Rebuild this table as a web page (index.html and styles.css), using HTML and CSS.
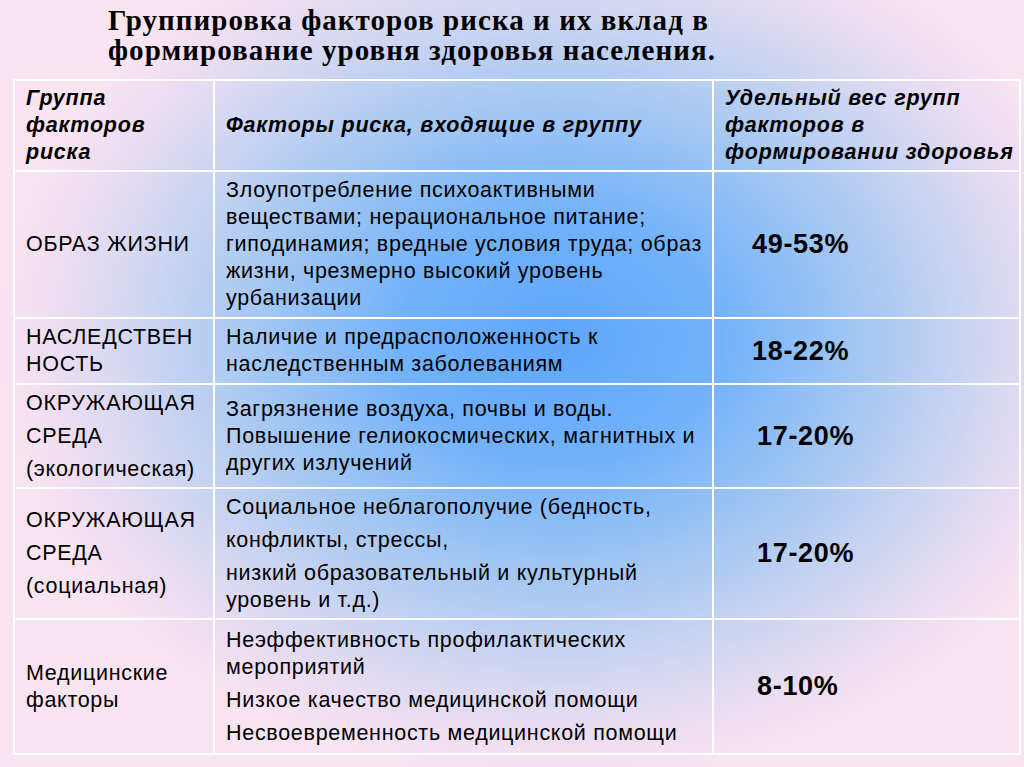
FILE: index.html
```html
<!DOCTYPE html>
<html lang="ru">
<head>
<meta charset="utf-8">
<link rel="stylesheet" href="styles.css">
</head>
<body>
<div class="slide">
  <h1 class="title">Группировка факторов риска и их вклад в<br>формирование уровня здоровья населения.</h1>
  <table class="grid">
    <colgroup>
      <col class="c1"><col class="c2"><col class="c3">
    </colgroup>
    <tr class="r-head">
      <th>Группа<br>факторов<br>риска</th>
      <th>Факторы риска, входящие в группу</th>
      <th>Удельный вес групп<br>факторов в<br>формировании здоровья</th>
    </tr>
    <tr class="r1">
      <td>ОБРАЗ ЖИЗНИ</td>
      <td>Злоупотребление психоактивными<br>веществами; нерациональное питание;<br>гиподинамия; вредные условия труда; образ<br>жизни, чрезмерно высокий уровень<br>урбанизации</td>
      <td class="pct">49-53%</td>
    </tr>
    <tr class="r2">
      <td>НАСЛЕДСТВЕН<br>НОСТЬ</td>
      <td>Наличие и предрасположенность к<br>наследственным заболеваниям</td>
      <td class="pct">18-22%</td>
    </tr>
    <tr class="r3">
      <td><p>ОКРУЖАЮЩАЯ</p><p>СРЕДА</p><p>(экологическая)</p></td>
      <td>Загрязнение воздуха, почвы и воды.<br>Повышение гелиокосмических, магнитных и<br>других излучений</td>
      <td class="pct pct-in">17-20%</td>
    </tr>
    <tr class="r4">
      <td><p>ОКРУЖАЮЩАЯ</p><p>СРЕДА</p><p>(социальная)</p></td>
      <td><p>Социальное неблагополучие (бедность,</p><p>конфликты, стрессы,</p><p>низкий образовательный и культурный<br>уровень и т.д.)</p></td>
      <td class="pct pct-in">17-20%</td>
    </tr>
    <tr class="r5">
      <td>Медицинские<br>факторы</td>
      <td><p>Неэффективность профилактических<br>мероприятий</p><p>Низкое качество медицинской помощи</p><p>Несвоевременность медицинской помощи</p></td>
      <td class="pct pct-in">8-10%</td>
    </tr>
  </table>
</div>
</body>
</html>
```

FILE: styles.css
```css
html, body {
  margin: 0;
  padding: 0;
}
body {
  width: 1024px;
  height: 767px;
  overflow: hidden;
  font-family: "Liberation Sans", Arial, sans-serif;
  color: #000;
}
.slide {
  width: 1024px;
  height: 767px;
  box-sizing: border-box;
  padding-top: 5px;
  background:
    radial-gradient(ellipse 560px 440px at 560px 340px,
      #5ea6fb 0%, #72b2fb 28%, #a6c8f2 55%, #d6d8f2 78%, #f0def2 92%, #f9e4f2 100%);
}
.title {
  margin: 0 0 0 108px;
  font-family: "Liberation Serif", "Times New Roman", serif;
  font-weight: bold;
  font-size: 29px;
  line-height: 30px;
  letter-spacing: 1.05px;
  height: 74px;
}
.grid {
  margin: 0 0 0 13px;
  width: 1006px;
  border-collapse: collapse;
  table-layout: fixed;
  border: 2px solid #fff;
}
.c1 { width: 200px; }
.c2 { width: 499px; }
.c3 { width: 307px; }
.grid th, .grid td {
  border: 2px solid #fff;
  padding: 0 2px 0 11px;
  font-size: 21.5px;
  line-height: 27px;
  letter-spacing: 0.7px;
  vertical-align: middle;
  text-align: left;
  white-space: nowrap;
}
.grid th {
  font-weight: bold;
  font-style: italic;
  letter-spacing: 0.8px;
}
.grid p {
  margin: 0;
  line-height: 27px;
}
.grid p + p {
  margin-top: 6px;
}
.r-head { height: 91px; }
.r1 { height: 147px; }
.r2 { height: 66px; }
.r3 { height: 104px; }
.r4 { height: 131px; }
.r5 { height: 135px; }
.grid td.pct {
  font-weight: bold;
  font-size: 27px;
  letter-spacing: 0.7px;
  padding-left: 38px;
}
.grid td.pct-in {
  padding-left: 43px;
}
```
